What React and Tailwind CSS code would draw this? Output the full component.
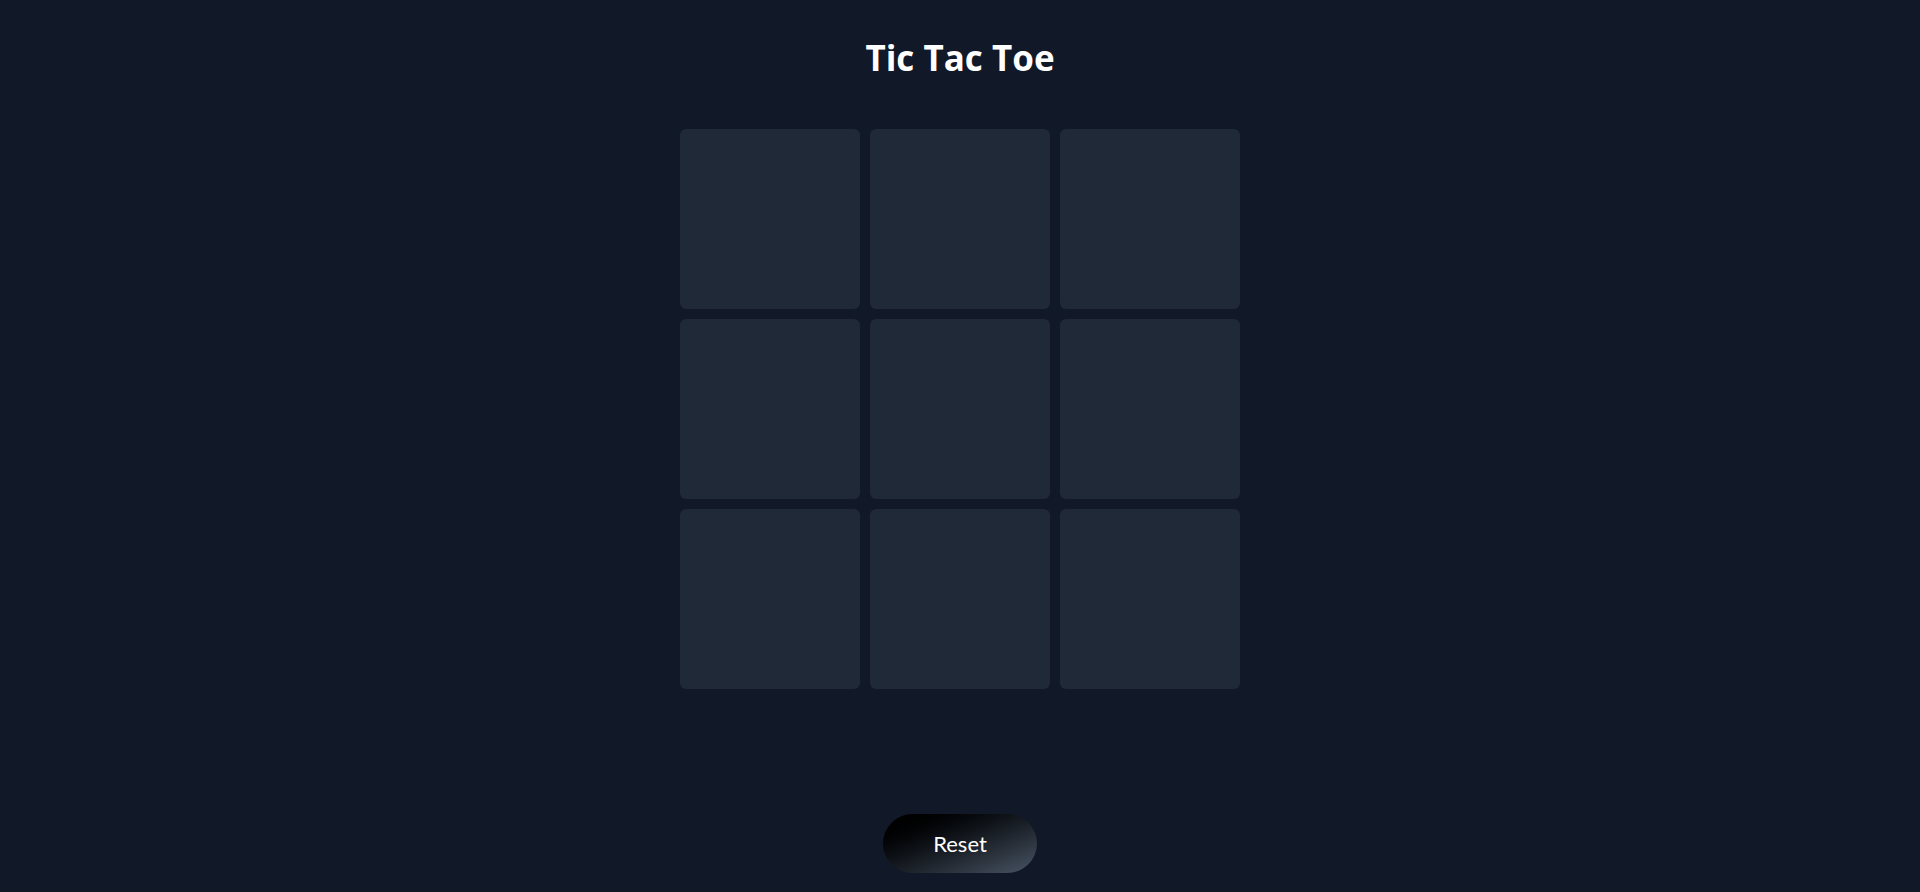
import React, { useState } from 'react';

const Cell = ({ value, onClick }) =>
<button
  onClick={onClick}
  className="w-[180px] h-[180px] rounded-md bg-[#1f2937] text-white text-6xl font-bold flex items-center justify-center">
    {value}
  </button>;


export default function App() {
  const [board, setBoard] = useState(Array(9).fill(null));
  const [xNext, setXNext] = useState(true);

  const play = (i) => {
    if (board[i]) return;
    const next = board.slice();
    next[i] = xNext ? 'X' : 'O';
    setBoard(next);
    setXNext(!xNext);
  };

  const reset = () => {
    setBoard(Array(9).fill(null));
    setXNext(true);
  };

  return (
    <div
      className="min-h-screen bg-[#111827] flex flex-col items-center pt-[38px] pb-[19px]"
      style={{ fontFamily: '"Open Sans", "Noto Sans", sans-serif' }}>
      <h1 className="text-[35px] leading-[40px] font-bold text-white">Tic Tac Toe</h1>
      <div className="grid grid-cols-3 gap-[10px] mt-[51px]">
        {board.map((v, i) => <Cell key={i} value={v} onClick={() => play(i)} />)}
      </div>
      <div className="flex-1" />
      <button
        onClick={reset}
        className="w-[154px] h-[59px] rounded-full bg-gradient-to-br from-black to-gray-600 text-white text-[22px] font-['Lato',sans-serif]">
        Reset
      </button>
    </div>);

}
